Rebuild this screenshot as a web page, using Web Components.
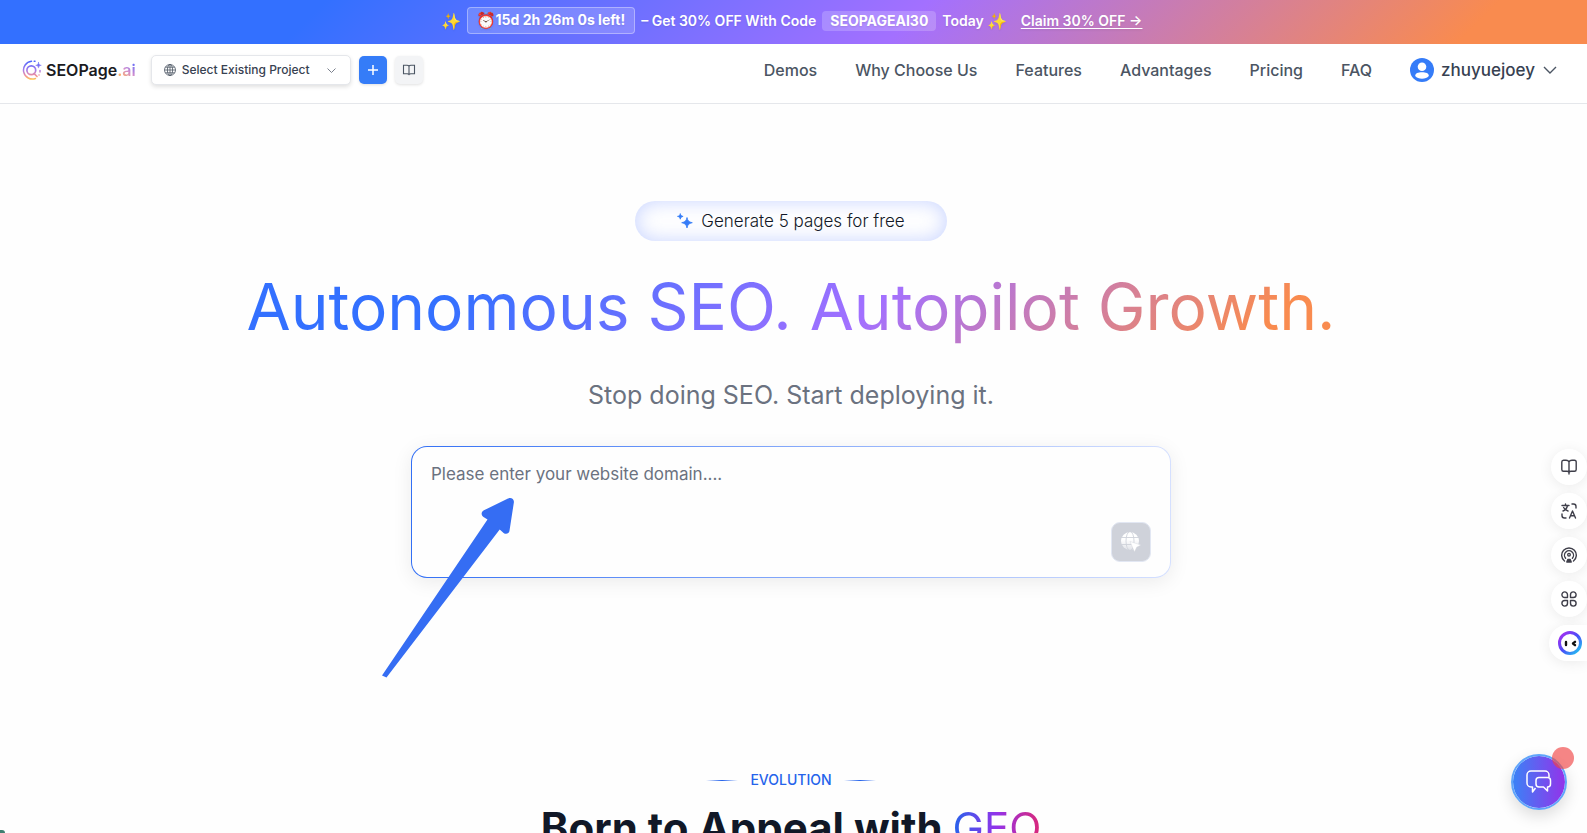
<!DOCTYPE html>
<html lang="en">
<head>
<meta charset="utf-8">
<meta name="viewport" content="width=device-width, initial-scale=1">
<title>SEOPage.ai</title>
<style>
  html, body { margin: 0; height: 100%; }
  body {
    font-family: Inter, "Noto Sans", sans-serif;
    color: #111827;
    background: #fefefe;
    --brand-gradient: linear-gradient(135deg, #3370ff 20%, #a370ff 57%, #f98b4f 92%);
  }
</style>
</head>
<body>
<seo-app></seo-app>

<template id="promo-banner">
  <style>
    :host { display: block; background: var(--brand-gradient); color: #fff; }
    .row { display: flex; align-items: center; justify-content: center; gap: 6px; padding: 7px 4px 10px 0; font-size: 14px; line-height: 20px; font-weight: 600; white-space: nowrap; text-shadow: 0 1px 2px rgba(0,0,0,.1); }
    .timer { display: flex; padding: 2px 9px 3px 8px; border: 1px solid rgba(255,255,255,.35); border-radius: 4px; background: rgba(255,255,255,.17); font-weight: 700; }
    .emoji { font-size: 16px; }
    .code { padding: 0 8px; border-radius: 4px; background: rgba(255,255,255,.2); font-weight: 700; }
    a { color: inherit; margin-left: 8px; text-underline-offset: 2px; }
    .today { display: flex; gap: 3px; }
  </style>
  <div class="row">
    <span class="emoji">✨</span>
    <span class="timer"><span class="emoji">⏰</span><span>15d 2h 26m 0s left!</span></span>
    <span>– Get 30% OFF With Code</span>
    <span class="code">SEOPAGEAI30</span>
    <span class="today"><span>Today</span><span class="emoji">✨</span></span>
    <a href="#claim">Claim 30% OFF →</a>
  </div>
</template>

<template id="site-logo">
  <style>
    :host { display: block; }
    a { display: flex; align-items: center; gap: 4px; color: #1b1b1f; text-decoration: none; font-size: 16px; line-height: 24px; font-weight: 600; }
    svg { display: block; }
    .tld { background: linear-gradient(35deg, #ffb36b 20%, #d08ccf 50%, #5b6bff 90%); -webkit-background-clip: text; background-clip: text; color: transparent; }
  </style>
  <a href="#home">
    <svg width="20" height="20" viewBox="0 0 20 20" fill="none" stroke="url(#lg)" stroke-linecap="round">
      <defs><linearGradient id="lg" x1="0" y1="0" x2="0" y2="20" gradientUnits="userSpaceOnUse"><stop offset="0" stop-color="#3f62ff"/><stop offset=".5" stop-color="#a77bea"/><stop offset=".78" stop-color="#f08f9b"/><stop offset="1" stop-color="#ffce4a"/></linearGradient></defs>
      <path d="M9.500 1.300A8.900 8.900 0 1 0 13.500 18.500" stroke-width="1.500"/>
      <circle cx="9.300" cy="10.200" r="4.400" stroke-width="1.700"/>
      <path d="M12 13.500l3 3" stroke-width="1.700"/>
      <path d="M16.500 2.500c.3 2 .9 2.500 2.800 2.800-1.900.3-2.500.9-2.800 2.800-.3-1.900-.9-2.500-2.800-2.800 1.900-.3 2.500-.8 2.800-2.800z" fill="url(#lg)" stroke-width=".5"/>
      <path d="M12.200 1.300h.8M18 10.500v1.500M17 15h.1" stroke-width="1.500"/>
    </svg>
    <span>SEOPage<span class="tld">.ai</span></span>
  </a>
</template>

<template id="project-picker">
  <style>
    :host { display: flex; align-items: center; gap: 8px; }
    label { display: flex; align-items: center; box-sizing: border-box; width: 200px; height: 30px; padding: 0 14px 0 12px; gap: 6px; border: 1px solid #e5e7eb; border-radius: 5px; background: #fff; box-shadow: 0 2px 4px rgba(0,0,0,.12); }
    select { flex: 1; min-width: 0; appearance: none; border: 0; padding: 0; background: none; outline: 0; font: 500 12px/18px Inter, sans-serif; color: #374151; }
    button { display: grid; place-items: center; width: 28px; height: 28px; padding: 0; border: 0; border-radius: 5px; background: #f3f4f6; color: #4b5563; box-shadow: 0 1px 3px rgba(0,0,0,.12); }
    .add { background: #357cf8; color: #fff; }
    svg { display: block; flex: none; fill: none; stroke: currentColor; }
  </style>
  <label>
    <svg width="12" height="12" viewBox="0 0 12 12" color="#4b5563" stroke-width=".8" aria-hidden="true"><circle cx="6" cy="6" r="5.500"/><ellipse cx="6" cy="6" rx="2.600" ry="5.500"/><path d="M6 .5v11M.5 6h11M1.300 3.200h9.400M1.300 8.800h9.400"/></svg>
    <select aria-label="Project"><option>Select Existing Project</option></select>
    <svg width="9" height="9" viewBox="0 0 9 9" color="#6b7280" aria-hidden="true"><path d="M.5 2.500l4 4 4-4" stroke-width=".9"/></svg>
  </label>
  <button class="add" aria-label="Add project"><svg width="12" height="12" viewBox="0 0 12 12" stroke-width="1.500"><path d="M6 1v10M1 6h10"/></svg></button>
  <button aria-label="Guide"><svg width="14" height="12" viewBox="0 0 14 12" stroke-width="1.100"><path d="M7 2.200C6.600 1.400 6 1.200 5 1.200H1.500v8.600h3.700c.9 0 1.500.2 1.800.7.300-.5.900-.7 1.800-.7h3.700V1.200H9c-1 0-1.600.2-2 1zV10"/></svg></button>
</template>

<template id="site-header">
  <style>
    :host { display: flex; align-items: center; justify-content: space-between; padding: 11px 29px 18px 22px; background: #fff; border-bottom: 1px solid #e5e7eb; }
    .start { display: flex; align-items: center; gap: 15px; }
    .end, nav { display: flex; align-items: center; gap: 38px; }
    nav a { font-size: 16px; line-height: 24px; font-weight: 500; color: #4b5563; text-decoration: none; white-space: nowrap; }
    button { display: flex; align-items: center; gap: 7px; border: 0; padding: 0; background: none; font: 500 17px/24px Inter, sans-serif; color: #374151; }
    svg { display: block; }
  </style>
  <div class="start"><site-logo></site-logo><project-picker></project-picker></div>
  <div class="end">
    <nav aria-label="Main">
      <a href="#demos">Demos</a><a href="#why">Why Choose Us</a><a href="#features">Features</a><a href="#advantages">Advantages</a><a href="#pricing">Pricing</a><a href="#faq">FAQ</a>
    </nav>
    <button>
      <svg width="24" height="24" viewBox="0 0 24 24" aria-hidden="true"><circle cx="12" cy="12" r="12" fill="#357cf8"/><circle cx="12" cy="8.800" r="4.300" fill="#fff"/><path d="M5.200 18c0-2.800 2.800-3.800 6.800-3.800s6.800 1 6.800 3.800c-1.500 1.700-3.900 2.800-6.800 2.800S6.700 19.700 5.200 18z" fill="#fff"/></svg>
      <span>zhuyuejoey</span>
      <svg width="16" height="16" viewBox="0 0 16 16" fill="none" stroke="#4b5563" stroke-width="1.400" aria-hidden="true"><path d="M2 5l6 6 6-6"/></svg>
    </button>
  </div>
</template>

<template id="offer-pill">
  <style>
    :host { display: flex; align-items: center; justify-content: center; gap: 8px; box-sizing: border-box; width: 312px; height: 40px; border-radius: 20px; background: #fff; box-shadow: inset 0 0 20px rgba(99,132,255,.36); font-size: 17px; line-height: 24px; font-weight: 300; color: #111827; }
  </style>
  <svg width="16" height="16" viewBox="0 0 16 16" fill="#357cf8" stroke="#357cf8" stroke-width=".8" stroke-linejoin="round" aria-hidden="true"><path d="M10 4.500c.8 3.500 1.800 4.400 5.300 5.200-3.500.8-4.500 1.800-5.300 5.300-.8-3.500-1.800-4.500-5.300-5.300 3.500-.8 4.500-1.700 5.300-5.200zM3.300.6c.4 1.800 1 2.400 2.800 2.800-1.800.4-2.400 1-2.800 2.800-.4-1.800-1-2.400-2.800-2.800 1.800-.4 2.400-1 2.800-2.800z"/></svg>
  <slot></slot>
</template>

<template id="domain-box">
  <style>
    :host { display: block; position: relative; width: 100%; max-width: 760px; }
    form { box-sizing: border-box; display: flex; flex-direction: column; min-height: 132px; padding: 15px 19px; border: 1px solid transparent; border-radius: 16px; background: linear-gradient(#fefefe, #fefefe) padding-box, linear-gradient(90deg, #3370f5, #d5e0ff) border-box; box-shadow: 0 4px 20px rgba(0,0,0,.08); }
    textarea { display: block; flex: 1; width: 100%; box-sizing: border-box; resize: none; border: 0; padding: 0; outline: 0; background: none; font: 400 17px/24px Inter, sans-serif; color: #111827; }
    textarea::placeholder { color: #6b7280; opacity: 1; }
    button { align-self: flex-end; display: grid; place-items: center; width: 40px; height: 40px; padding: 0; border: 1px solid #e2e7f3; border-radius: 9px; background: #cfd2da; }
    .pointer { position: absolute; left: -30px; top: 52px; pointer-events: none; }
  </style>
  <form>
    <textarea aria-label="Website domain" placeholder="Please enter your website domain...."></textarea>
    <button type="button" aria-label="Analyze website">
      <svg width="20" height="20" viewBox="0 0 20 20" aria-hidden="true">
        <defs><linearGradient id="gg" x1="0" y1="0" x2="0" y2="1"><stop offset=".4" stop-color="#fff"/><stop offset="1" stop-color="#e2e4e9"/></linearGradient></defs>
        <circle cx="9" cy="9" r="9" fill="url(#gg)"/>
        <g fill="none" stroke="#cfd2da" stroke-width=".9"><path d="M0 5.500h18M0 12.500h18"/><ellipse cx="9" cy="9" rx="4" ry="9.500"/></g>
        <path d="M9 9.500l11 3.600-4.300 2.100-2.200 4.800z" fill="#fff" stroke="#cfd2da" stroke-width=".4"/>
      </svg>
    </button>
  </form>
  <svg class="pointer" width="134" height="182" viewBox="0 0 134 182" aria-hidden="true">
    <path d="M1 177.500L106.500 21.500l-4-2.500c-2.800-1.800-2.300-5.200.4-6.700L127 .6c3-1.400 6.200.4 5.900 3.600l-4.400 28.500c-.4 3-3.600 3.900-5.900 2.200l-3.900-3.500L5.500 179.500z" fill="#356df3"/>
  </svg>
</template>

<template id="hero-section">
  <style>
    :host { display: flex; flex-direction: column; align-items: center; padding: 97px 20px 192px; }
    h1 { margin: 26px 0 30px; font-size: 64px; line-height: 80px; font-weight: 400; text-align: center; background: var(--brand-gradient); -webkit-background-clip: text; background-clip: text; color: transparent; }
    p { margin: 0 0 33px; font-size: 25px; line-height: 36px; color: #6b7280; text-align: center; }
  </style>
  <offer-pill>Generate 5 pages for free</offer-pill>
  <h1>Autonomous SEO. Autopilot Growth.</h1>
  <p>Stop doing SEO. Start deploying it.</p>
  <domain-box></domain-box>
</template>

<template id="evolution-section">
  <style>
    :host { display: flex; flex-direction: column; align-items: center; gap: 14px; padding-bottom: 80px; }
    .eyebrow { display: flex; align-items: center; gap: 12px; font-size: 14px; line-height: 20px; font-weight: 500; color: #2563eb; }
    .eyebrow::before, .eyebrow::after { content: ""; width: 32px; height: 1px; background: linear-gradient(90deg, transparent, #2563eb 50%, transparent); }
    h2 { margin: 0; font-size: 42px; line-height: 48px; font-weight: 700; color: #111827; text-align: center; }
    h2 span { font-weight: 400; background: linear-gradient(90deg, #2563eb, #9333ea 50%, #db2777); -webkit-background-clip: text; background-clip: text; color: transparent; }
  </style>
  <div class="eyebrow">EVOLUTION</div>
  <h2>Born to Appeal with <span>GEO</span></h2>
</template>

<template id="side-tools">
  <style>
    :host { position: fixed; right: 0; top: 449px; display: flex; flex-direction: column; align-items: flex-end; gap: 8px; }
    button { display: grid; place-items: center; width: 36px; height: 36px; padding: 0; border: 0; border-radius: 18px; background: #fff; color: #3f3f4a; box-shadow: 0 2px 14px rgba(0,0,0,.08); }
    .tab { width: 38px; border-radius: 18px 0 0 18px; padding-left: 4px; }
    svg { display: block; fill: none; stroke: currentColor; stroke-width: 1.400; stroke-linecap: round; stroke-linejoin: round; }
  </style>
  <button aria-label="Read"><svg width="16" height="16" viewBox="0 0 16 16"><path d="M8 3C7.500 1.700 6.500 1.200 5 1.200H2.500C1.300 1.200.8 1.800.8 3v7.500c0 1.200.6 1.800 1.700 1.800H6c1 0 2 .5 2 1.500 0-1 1-1.500 2-1.500h3.500c1.100 0 1.700-.6 1.700-1.800V3c0-1.200-.5-1.800-1.700-1.800H11C9.500 1.200 8.500 1.700 8 3zv12"/></svg></button>
  <button aria-label="Translate"><svg width="16" height="16" viewBox="0 0 16 16"><path d="M1 2.500h7M4.500 1v1.500M2 8c2.500-1 4-3 4.500-5.500M2.600 4.500C3.500 6.200 5 7.500 7 8M8.500 15l3-7 3 7M9.500 12.800h4M11 1h1.500C14 1 15 2 15 3.500V5M1 11v1.500C1 14 2 15 3.500 15H5"/></svg></button>
  <button aria-label="Listen"><svg width="16" height="16" viewBox="0 0 16 16"><path d="M3.500 14A7.300 7.300 0 1 1 12.500 14M4.600 11.200a4.500 4.500 0 1 1 6.800 0"/><circle cx="8" cy="7.700" r="1.300"/><path d="M5.800 15l1-2.500h2.400l1 2.500z" fill="currentColor"/></svg></button>
  <button aria-label="Apps"><svg width="16" height="16" viewBox="0 0 16 16"><path d="M6.500 6.500H3.700a2.800 2.800 0 1 1 2.800-2.800zM9.500 6.500V3.700a2.800 2.800 0 1 1 2.800 2.800zM6.500 9.500v2.800a2.800 2.800 0 1 1-2.800-2.800zM9.500 9.500h2.800a2.800 2.800 0 1 1-2.800 2.800z"/></svg></button>
  <button class="tab" aria-label="Assistant"><svg width="24" height="24" viewBox="0 0 24 24"><defs><linearGradient id="rg" x1="0" y1="0" x2="1" y2="1"><stop offset="0" stop-color="#b12cf0"/><stop offset=".5" stop-color="#4a4cf8"/><stop offset="1" stop-color="#1ed0f0"/></linearGradient></defs><circle cx="12" cy="12" r="10.500" stroke="url(#rg)" stroke-width="3"/><path d="M8 11v3M17 10.800l-2 1.700 2 1.700" stroke="#111" stroke-width="2.400"/></svg></button>
</template>

<template id="chat-bubble">
  <style>
    :host { position: fixed; right: 20px; bottom: 23px; }
    button { display: grid; place-items: center; box-sizing: border-box; width: 56px; height: 56px; padding: 0; border: 2px solid #60a5fa; border-radius: 50%; background: linear-gradient(90deg, #3b82f6, #9333ea) padding-box; box-shadow: 0 6px 16px rgba(0,0,0,.14); }
    .dot { position: absolute; right: -7px; top: -7px; width: 22px; height: 22px; border-radius: 50%; background: rgba(239,68,68,.65); }
  </style>
  <button aria-label="Open chat">
    <svg width="26" height="24" viewBox="0 0 26 24" fill="none" stroke="#fff" stroke-width="1.500" stroke-linejoin="round" aria-hidden="true"><path d="M9.500 18L6.500 22v-5H5a4 4 0 0 1-4-4V5a4 4 0 0 1 4-4h14a4 4 0 0 1 4 4v2"/><path d="M13 7.500h8.500a3 3 0 0 1 3 3V14a3 3 0 0 1-3 3v4l-4-4H13a3 3 0 0 1-3-3v-3.500a3 3 0 0 1 3-3z"/></svg>
  </button>
  <span class="dot"></span>
</template>

<template id="seo-app">
  <style>
    :host { display: block; position: relative; height: 100vh; overflow-x: hidden; overflow-y: auto; scrollbar-width: none; }
    main { padding-right: 5px; }
    .corner { position: fixed; left: 0; bottom: 0; width: 5px; height: 3px; border-radius: 0 5px 0 0; background: #3f7f70; }
  </style>
  <promo-banner></promo-banner>
  <site-header></site-header>
  <main><hero-section></hero-section><evolution-section></evolution-section></main>
  <side-tools></side-tools>
  <chat-bubble></chat-bubble>
  <span class="corner"></span>
</template>

<script>
  class TemplateElement extends HTMLElement {
    constructor() {
      super();
      const template = document.getElementById(this.localName);
      this.attachShadow({ mode: "open" }).append(template.content.cloneNode(true));
    }
  }
  for (const t of document.querySelectorAll("template")) {
    customElements.define(t.id, class extends TemplateElement {});
  }
</script>
</body>
</html>
